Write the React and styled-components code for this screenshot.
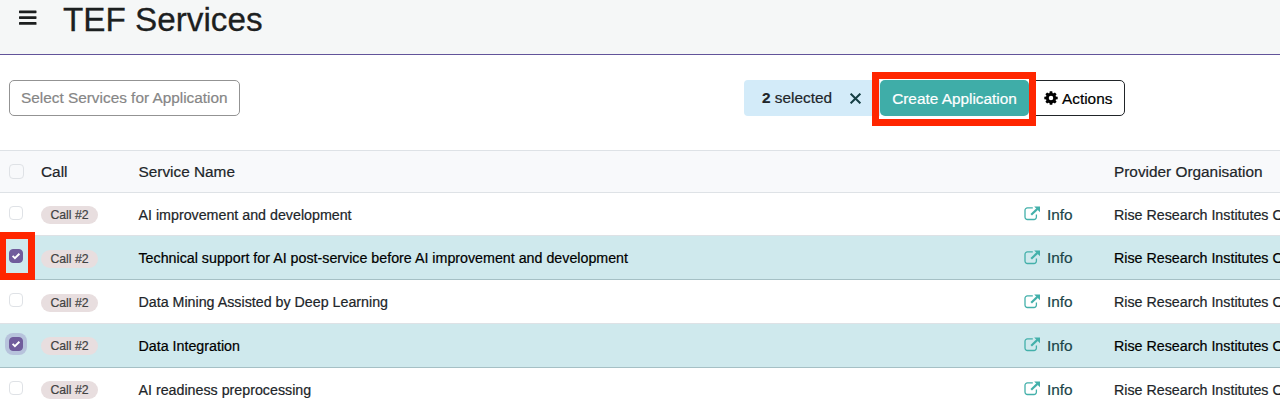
import React from "react";
import styled, { createGlobalStyle, css } from "styled-components";

const GlobalStyle = createGlobalStyle`
  * { box-sizing: border-box; }
  body {
    margin: 0;
    background: #fff;
    color: #212529;
    font-family: "Liberation Sans", Arial, sans-serif;
    font-size: 15.36px;
    overflow: hidden;
    -webkit-text-stroke: 0.2px currentColor;
  }
`;

const Page = styled.div`
  width: 100%;
  height: 400px;
  overflow: hidden;
`;

const Header = styled.header`
  height: 55px;
  display: flex;
  align-items: flex-start;
  background: #f5f7f7;
  border-bottom: 1px solid #62549a;
`;

const MenuButton = styled.button`
  display: flex;
  border: 0;
  padding: 10px 0 0 19px;
  background: none;
  width: 63px;
  height: 30px;
  color: #1c1f1f;
`;

const Title = styled.h1`
  margin: 0;
  font-weight: 400;
  font-size: 33.25px;
  line-height: 40px;
  color: #1c2020;
  -webkit-text-stroke: 0.3px #1c2020;
`;

const Toolbar = styled.div`
  display: flex;
  align-items: center;
  height: 95px;
  padding: 0 155px 10px 9px;
`;

const Hint = styled.div`
  height: 36px;
  width: 231px;
  line-height: 34px;
  padding-left: 11px;
  margin-right: auto;
  border: 1px solid #939393;
  border-radius: 5px;
  color: #868686;
  white-space: nowrap;
`;

const Selected = styled.div`
  display: flex;
  align-items: center;
  width: 136px;
  height: 36px;
  padding: 1px 0 0 18px;
  border-radius: 4px 0 0 4px;
  background: #d3ebf9;
  white-space: nowrap;

  svg { margin-left: 18px; }
`;

const CreateButton = styled.button`
  position: relative;
  width: 149px;
  height: 36px;
  padding: 2px 0 0;
  border: 0;
  border-radius: 5px;
  background: #3fada8;
  color: #fff;
  font: inherit;
  white-space: nowrap;
`;

const Highlight = styled.span`
  position: absolute;
  pointer-events: none;
  border: solid #ff2600;
  z-index: 2;
  ${(p) =>
    p.$kind === "button"
      ? css`inset: -8px -7px -10px -8px; border-width: 7px;`
      : css`left: 0; top: -4px; width: 35px; height: 48px; border-width: 7px 7px 7px 6px;`}
`;

const ActionsButton = styled.button`
  display: flex;
  align-items: center;
  gap: 4px;
  width: 96px;
  height: 36px;
  padding: 2px 0 0 14px;
  border: 1px solid #212529;
  border-radius: 0 5px 5px 0;
  background: #fff;
  color: #000;
  font: inherit;

  svg { margin-top: -1px; }
`;

const Grid = styled.div`
  display: grid;
  grid-template-columns: 41px 97.5px 885.5px 90px 1fr;
`;

const HeadRow = styled(Grid)`
  height: 42.5px;
  align-items: center;
  background: #f8f9fb;
  border-top: 1px solid #dee2e6;
  border-bottom: 1px solid #dee2e6;
`;

const Row = styled(Grid)`
  position: relative;
  height: 43.75px;
  font-size: 14.26px;
  border-bottom: 1px solid ${(p) => (p.$selected ? "#a5c0c5" : "#dee2e6")};
  background: ${(p) => (p.$selected ? "#cfe9ed" : "#fff")};
  color: ${(p) => (p.$selected ? "#000" : "#212529")};
`;

const Cell = styled.div`
  line-height: ${(p) => (p.$head ? "41px" : "44px")};
  white-space: nowrap;
`;

const CheckCell = styled.div`
  padding: ${(p) => (p.$head ? "0 0 0 9px" : "13px 0 0 9px")};
`;

const Checkbox = styled.span`
  display: flex;
  align-items: center;
  justify-content: center;
  width: ${(p) => (p.$head ? "15px" : "14px")};
  height: ${(p) => (p.$head ? "15px" : "14px")};
  border-radius: 4px;
  border: 1px solid ${(p) => (p.$checked ? "#705c9c" : "#dfe2e6")};
  background: ${(p) => (p.$checked ? "#705c9c" : "transparent")};
  ${(p) => p.$focused && css`box-shadow: 0 0 0 4px #b7c3dc;`}
`;

const Badge = styled.span`
  display: block;
  width: 57px;
  height: 18px;
  margin-top: 13.5px;
  border-radius: 9px;
  background: #e8dedf;
  color: #414242;
  font-size: 12.29px;
  line-height: 18px;
  text-align: center;
`;

const InfoLink = styled.a`
  display: flex;
  align-items: center;
  gap: 6px;
  height: 44px;
  font-size: 15.36px;
  color: #1c4549;

  svg { margin-top: -2px; }
`;

const MenuIcon = () => (
  <svg width="18" height="16" viewBox="0 0 18 16" fill="currentColor">
    <rect x="0" y="0.5" width="17.5" height="2.700" rx="0.6" />
    <rect x="0" y="6.2" width="17.5" height="2.700" rx="0.6" />
    <rect x="0" y="12.1" width="17.5" height="2.700" rx="0.6" />
  </svg>
);

const CloseIcon = () => (
  <svg width="11" height="11" viewBox="0 0 10 10" stroke="#153e44" strokeWidth="1.800" fill="none">
    <path d="M.6.6 9.4 9.4M9.4.6.6 9.4" />
  </svg>
);

const GearIcon = () => (
  <svg width="14" height="14" viewBox="-7 -7 14 14" fill="currentColor">
    <circle r="3.700" fill="none" stroke="currentColor" strokeWidth="2.900" />
    {[0, 45, 90, 135, 180, 225, 270, 315].map((angle) => (
      <path key={angle} d="M-1.600-4.300-1.250-6.700h2.500L1.600-4.300z" transform={`rotate(${angle})`} />
    ))}
  </svg>
);

const ExternalIcon = () => (
  <svg width="17" height="15" viewBox="0 0 17 15" fill="none" stroke="#43b0aa">
    <path d="M8.800 1.900H3.400A2.400 2.400 0 0 0 1 4.300v6.800a2.400 2.400 0 0 0 2.400 2.400h6.600a2.400 2.400 0 0 0 2.400-2.400V8.600" strokeWidth="1.300" />
    <path d="M7.200 8.800 13.400 2.900" strokeWidth="2.200" />
    <path d="M10.200.5H16v5.800z" fill="#43b0aa" stroke="none" />
  </svg>
);

const CheckIcon = () => (
  <svg width="10" height="8" viewBox="0 0 10 8" fill="none" stroke="#fff" strokeWidth="1.900">
    <path d="m1.600 3.900 2.300 2.200L8.400 1.700" />
  </svg>
);

const services = [
  { name: "AI improvement and development" },
  { name: "Technical support for AI post-service before AI improvement and development", selected: true, highlighted: true },
  { name: "Data Mining Assisted by Deep Learning" },
  { name: "Data Integration", selected: true, focused: true },
  { name: "AI readiness preprocessing" },
];

function ServiceRow({ service }) {
  const { name, selected, highlighted, focused } = service;
  return (
    <Row $selected={selected}>
      <CheckCell>
        <Checkbox $checked={selected} $focused={focused}>
          {selected && <CheckIcon />}
        </Checkbox>
        {highlighted && <Highlight $kind="checkbox" />}
      </CheckCell>
      <div><Badge>Call #2</Badge></div>
      <Cell>{name}</Cell>
      <InfoLink><ExternalIcon />Info</InfoLink>
      <Cell>Rise Research Institutes O</Cell>
    </Row>
  );
}

export default function App() {
  return (
    <Page>
      <GlobalStyle />
      <Header>
        <MenuButton aria-label="Menu"><MenuIcon /></MenuButton>
        <Title>TEF Services</Title>
      </Header>
      <Toolbar>
        <Hint>Select Services for Application</Hint>
        <Selected>
          <span><b>2</b> selected</span>
          <CloseIcon />
        </Selected>
        <CreateButton>
          Create Application
          <Highlight $kind="button" />
        </CreateButton>
        <ActionsButton><GearIcon />Actions</ActionsButton>
      </Toolbar>
      <HeadRow>
        <CheckCell $head><Checkbox $head /></CheckCell>
        <Cell $head>Call</Cell>
        <Cell $head>Service Name</Cell>
        <span />
        <Cell $head>Provider Organisation</Cell>
      </HeadRow>
      {services.map((s) => <ServiceRow key={s.name} service={s} />)}
    </Page>
  );
}
